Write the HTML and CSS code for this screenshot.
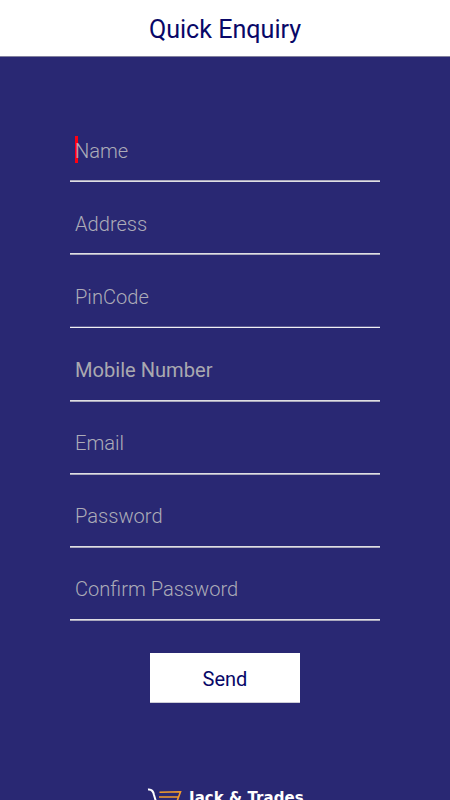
FILE: index.html
```
<!DOCTYPE html>
<html lang="en">
<head>
<meta charset="utf-8">
<title>Quick Enquiry</title>
<link rel="stylesheet" href="styles.css">
</head>
<body>
<header class="header"><h1 class="title">Quick Enquiry</h1></header>
<main class="form">
  <div class="field focused"><span class="label">Name</span></div>
  <div class="field"><span class="label">Address</span></div>
  <div class="field low"><span class="label">PinCode</span></div>
  <div class="field"><span class="label strong">Mobile Number</span></div>
  <div class="field raised"><span class="label">Email</span></div>
  <div class="field raised"><span class="label">Password</span></div>
  <div class="field raised"><span class="label">Confirm Password</span></div>
  <button class="send" type="button">Send</button>
</main>
<footer class="brand">
  <svg class="cart" width="36" height="24" viewBox="0 0 36 24" fill="none">
    <path d="M1 1.5C5 1 6.5 4 7 7L10 17H28" stroke="#fff" stroke-width="2"/>
    <path d="M12.5 4.2L33.5 3.8L29 16M12 9H31" stroke="#f39c2c" stroke-width="1.6"/>
  </svg>
  <span class="brand-name">Jack &amp; Trades</span>
</footer>
</body>
</html>
```

FILE: styles.css
```
* { box-sizing: border-box; }
html, body { margin: 0; height: 800px; overflow: hidden; }
body {
  background: #292873;
  font-family: Roboto, "Liberation Sans", sans-serif;
  display: flex;
  flex-direction: column;
}
.header {
  flex: none;
  height: 57px;
  background: #fff;
  border-bottom: 1px solid #82819f;
  text-align: center;
}
.title {
  margin: 0;
  font-size: 25.1px;
  font-weight: 400;
  line-height: 60px;
  color: #080868;
}
.form {
  width: 310px;
  margin: 52px auto 0;
  flex: none;
}
.field {
  position: relative;
  height: 73.17px;
  padding: 27px 0 0 5px;
  background: linear-gradient(#dedee4 50%, #a9a8bd 50%) bottom / 100% 2px no-repeat;
}
.focused { background-image: linear-gradient(#a9a8bd 50%, #dedee4 50%); }
.low { background-image: linear-gradient(#5c5b92 50%, #f0f0f3 50%); }
.raised { padding-top: 26.3px; }
.label {
  position: relative;
  display: block;
  font-size: 20.1px;
  font-weight: 300;
  line-height: 30px;
  color: #acacb8;
  white-space: nowrap;
}
.strong { font-weight: 400; color: #a9a9b0; }
.focused::before {
  content: "";
  position: absolute;
  left: 5px;
  top: 27px;
  width: 3px;
  height: 27px;
  background: #ff0010;
}
.send {
  display: block;
  width: 150px;
  height: 50px;
  margin: 32px auto 0;
  padding: 2px 0 0;
  border: 0;
  border-bottom: 1px solid #ccccd6;
  background: #fff;
  color: #080868;
  font: 400 20px Roboto, "Liberation Sans", sans-serif;
}
.brand {
  display: flex;
  width: 156px;
  height: 24px;
  margin: 85px auto 0;
  flex: none;
}
.cart { flex: none; }
.brand-name {
  margin-left: 6px;
  color: #fff;
  font: 700 15px/20px "DejaVu Sans", sans-serif;
  letter-spacing: 0.05px;
  white-space: nowrap;
}
```
